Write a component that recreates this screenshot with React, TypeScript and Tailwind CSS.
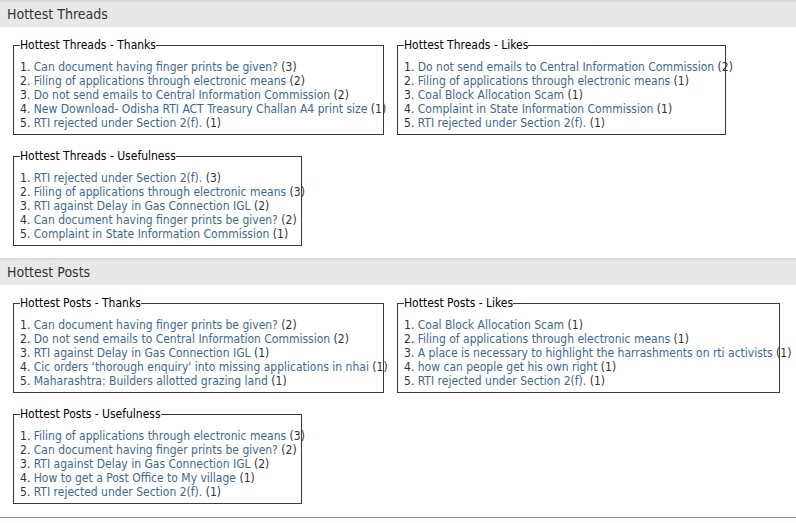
import React from "react";

type Item = { t: string; n: number };
type Box = { title: string; w: string; items: Item[] };

const threadsRow1: Box[] = [
  {
    title: "Hottest Threads - Thanks",
    w: "w-[371px]",
    items: [
      { t: "Can document having finger prints be given?", n: 3 },
      { t: "Filing of applications through electronic means", n: 2 },
      { t: "Do not send emails to Central Information Commission", n: 2 },
      { t: "New Download- Odisha RTI ACT Treasury Challan A4 print size", n: 1 },
      { t: "RTI rejected under Section 2(f).", n: 1 },
    ],
  },
  {
    title: "Hottest Threads - Likes",
    w: "w-[329px]",
    items: [
      { t: "Do not send emails to Central Information Commission", n: 2 },
      { t: "Filing of applications through electronic means", n: 1 },
      { t: "Coal Block Allocation Scam", n: 1 },
      { t: "Complaint in State Information Commission", n: 1 },
      { t: "RTI rejected under Section 2(f).", n: 1 },
    ],
  },
];
const threadsRow2: Box[] = [
  {
    title: "Hottest Threads - Usefulness",
    w: "w-[289px]",
    items: [
      { t: "RTI rejected under Section 2(f).", n: 3 },
      { t: "Filing of applications through electronic means", n: 3 },
      { t: "RTI against Delay in Gas Connection IGL", n: 2 },
      { t: "Can document having finger prints be given?", n: 2 },
      { t: "Complaint in State Information Commission", n: 1 },
    ],
  },
];
const postsRow1: Box[] = [
  {
    title: "Hottest Posts - Thanks",
    w: "w-[371px]",
    items: [
      { t: "Can document having finger prints be given?", n: 2 },
      { t: "Do not send emails to Central Information Commission", n: 2 },
      { t: "RTI against Delay in Gas Connection IGL", n: 1 },
      { t: "Cic orders \u2018thorough enquiry' into missing applications in nhai", n: 1 },
      { t: "Maharashtra: Builders allotted grazing land", n: 1 },
    ],
  },
  {
    title: "Hottest Posts - Likes",
    w: "w-[383px]",
    items: [
      { t: "Coal Block Allocation Scam", n: 1 },
      { t: "Filing of applications through electronic means", n: 1 },
      { t: "A place is necessary to highlight the harrashments on rti activists", n: 1 },
      { t: "how can people get his own right", n: 1 },
      { t: "RTI rejected under Section 2(f).", n: 1 },
    ],
  },
];
const postsRow2: Box[] = [
  {
    title: "Hottest Posts - Usefulness",
    w: "w-[289px]",
    items: [
      { t: "Filing of applications through electronic means", n: 3 },
      { t: "Can document having finger prints be given?", n: 2 },
      { t: "RTI against Delay in Gas Connection IGL", n: 2 },
      { t: "How to get a Post Office to My village", n: 1 },
      { t: "RTI rejected under Section 2(f).", n: 1 },
    ],
  },
];

function FieldBox({ box }: { box: Box }) {
  return (
    <fieldset
      className={`${box.w} min-w-0 shrink-0 border border-[#3a3a3a] pl-[6px] pr-0 pt-[8px] pb-[4px] m-0`}
    >
      <legend className="p-0 text-[12px] leading-[14px] text-black">{box.title}</legend>
      <ol className="m-0 p-0 list-none">
        {box.items.map((it, i) => (
          <li key={i} className="whitespace-nowrap text-[12px] leading-[14px] text-[#333]">
            {i + 1}. <a className="text-[#41698a]">{it.t}</a> ({it.n})
          </li>
        ))}
      </ol>
    </fieldset>
  );
}

function Section({ title, rows }: { title: string; rows: Box[][] }) {
  return (
    <div>
      <div className="h-[27px] border-t-2 border-[#d9d9d9] bg-[#e8e8e8] pl-[7px] text-[14px] leading-[25px] text-[#333]">
        {title}
      </div>
      <div className="pl-[13px] pt-[11px] pb-[12px] flex flex-col gap-[14px]">
        {rows.map((r, i) => (
          <div key={i} className="flex gap-[13px]">
            {r.map((b, j) => (
              <FieldBox key={j} box={b} />
            ))}
          </div>
        ))}
      </div>
    </div>
  );
}

export default function App() {
  return (
    <div
      className="w-[796px] h-[523px] bg-white overflow-hidden"
      style={{ fontFamily: '"DejaVu Sans Condensed", "DejaVu Sans", sans-serif' }}
    >
      <Section title="Hottest Threads" rows={[threadsRow1, threadsRow2]} />
      <Section title="Hottest Posts" rows={[postsRow1, postsRow2]} />
      <div className="mt-[1px] border-t border-[#7a959b]" />
    </div>
  );
}
